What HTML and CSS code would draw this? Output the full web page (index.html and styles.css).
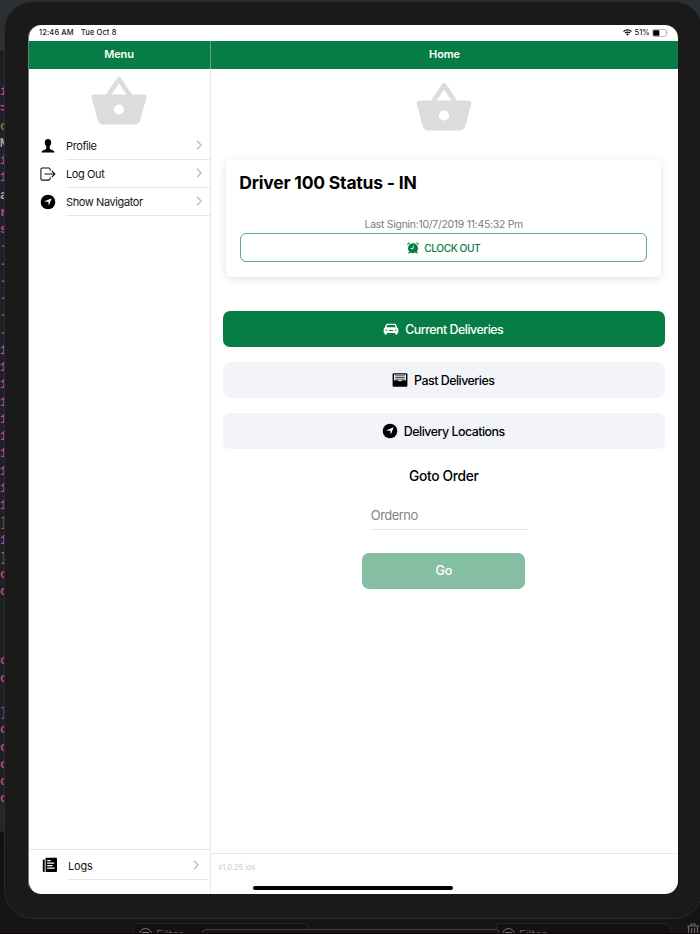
FILE: index.html
```html
<!DOCTYPE html>
<html lang="en">
<head>
<meta charset="utf-8">
<title>Home</title>
<link rel="stylesheet" href="styles.css">
</head>
<body>
<svg class="defs" width="0" height="0" aria-hidden="true">
  <symbol id="basket" viewBox="0 0 24 24"><path d="M17.21 9l-4.38-6.56c-.19-.28-.51-.42-.83-.42-.32 0-.64.14-.83.43L6.79 9H2c-.55 0-1 .45-1 1 0 .09.01.18.04.27l2.54 9.27c.23.84 1 1.46 1.92 1.46h13c.92 0 1.69-.62 1.93-1.46l2.54-9.27L23 10c0-.55-.45-1-1-1h-4.79zM9 9l3-4.4L15 9H9zm3 8c-1.1 0-2-.9-2-2s.9-2 2-2 2 .9 2 2-.9 2-2 2z"/></symbol>
  <symbol id="navigate" viewBox="0 0 16 16"><circle cx="8" cy="8" r="7.3"/><path d="M11.7 4.2 8.800 11.400 8.300 7.800 4 7.400z" fill="#fff"/></symbol>
  <symbol id="chevron" viewBox="0 0 6 10"><path d="M1 .8 5.100 5 1 9.200" fill="none" stroke="#bcbcc0" stroke-width="1.300"/></symbol>
</svg>
<div class="desktop">
  <div class="code"><span class="p">i</span><span class="p">=</span><span class="o">c</span><span class="w">M</span><span class="p">i</span><span class="p">1</span><span class="w">a</span><span class="p">r</span><span class="p">s</span><span class="p">-</span><span class="p">-</span><span class="p">-</span><span class="p">-</span><span class="p">-</span><span class="p">-</span><span class="p">1</span><span class="p">1</span><span class="p">1</span><span class="p">1</span><span class="p">1</span><span class="p">1</span><span class="p">1</span><span class="p">1</span><span class="p">1</span><span class="p">1</span><span class="o">]</span><span class="p">1</span><span class="o">]</span><span class="p">c</span><span class="p">c</span><span></span><span></span><span></span><span class="p">c</span><span class="p">c</span><span></span><span class="p">]</span><span class="p">c</span><span class="p">c</span><span class="p">c</span><span class="p">c</span><span class="p">c</span></div>
  <div class="device">
    <div class="screen">
      <div class="status">
        <span class="time">12:46 AM</span><span class="date">Tue Oct 8</span>
        <svg class="wifi" width="9" height="7" viewBox="0 0 9 7"><path d="M.5 2.500Q4.500-.8 8.500 2.500M2 4.100Q4.500 2 7 4.100" fill="none" stroke="#111" stroke-width="1.250"/><path d="M3.100 5.100Q4.500 4.100 5.900 5.100L4.500 6.700z"/></svg>
        <span class="percent">51%</span>
        <svg class="battery" width="17" height="8" viewBox="0 0 17 8"><rect x=".5" y=".5" width="13.800" height="7" rx="1.800" fill="none" stroke="#aaa" stroke-width=".8"/><rect x="1.200" y="1.300" width="6.200" height="5.400" rx=".6"/><path d="M15.300 2.600q1.200 1.400 0 2.800z" fill="#aaa"/></svg>
      </div>
      <div class="panes">
        <aside class="menu">
          <header class="bar">Menu</header>
          <svg class="logo"><use href="#basket"/></svg>
          <nav>
            <a class="row"><svg class="icon" viewBox="0 0 16 16"><path d="M8 .9c2 0 3.300 1.300 3.200 3.400-.1 2.100-.8 3.300-1.500 4.300v2c.6 1.500 4.600 1.300 4.900 3.900H1.400c.3-2.600 4.300-2.400 4.900-3.900v-2C5.600 7.600 4.900 6.400 4.800 4.300 4.700 2.200 6 .9 8 .9z"/></svg><span class="label">Profile<svg class="chev"><use href="#chevron"/></svg></span></a>
            <a class="row"><svg class="icon" viewBox="0 0 16 16"><path d="M10.200 4.700V3.200L8.900 1.900H1.900L.9 2.900V13.100L1.900 14.100H8.900L10.200 12.800V11.300M4.500 8H14.900M11.800 5 14.900 8 11.800 11" fill="none" stroke="#111" stroke-width="1.050"/></svg><span class="label">Log Out<svg class="chev"><use href="#chevron"/></svg></span></a>
            <a class="row"><svg class="icon"><use href="#navigate"/></svg><span class="label">Show Navigator<svg class="chev"><use href="#chevron"/></svg></span></a>
          </nav>
          <footer class="logs">
            <a class="row"><svg class="icon" viewBox="0 0 16 16"><path d="M3.600.8H14q1 0 1 1V14q0 1-1 1H3.600z"/><path d="M2.700 2.600H1.700Q.8 2.600.8 3.500V14q0 1 1 1h.9z"/><path d="M5.200 3.600h3.500M5.200 6.100h7M5.200 8.600h5.200M5.200 11.100h7.500" stroke="#fff" stroke-width="1.100"/></svg><span class="label">Logs<svg class="chev"><use href="#chevron"/></svg></span></a>
          </footer>
        </aside>
        <main class="home">
          <header class="bar">Home</header>
          <div class="content">
            <svg class="logo"><use href="#basket"/></svg>
            <section class="card">
              <h1>Driver 100 Status - IN</h1>
              <p>Last Signin:10/7/2019 11:45:32 Pm</p>
              <button class="clock"><svg width="12" height="12" viewBox="0 0 12 12"><circle cx="6" cy="6.300" r="5"/><path d="M.3 3.500Q0 .3 3.400.5zM11.700 3.500Q12 .3 8.600.5zM1 11.700 2.200 9 4 10.500zM11 11.700 9.800 9 8 10.500z"/><path d="M6.200 3.500V6.500H3.600" fill="none" stroke="#fff" stroke-width=".8"/></svg><span>CLOCK OUT</span></button>
            </section>
            <div class="actions">
              <button class="action primary"><svg viewBox="0 0 16 16"><path fill-rule="evenodd" d="M4 2.700h8q.7 0 1 .7L14.200 6.500q1.100.4 1.100 1.800v3.300q0 .4-.5.4h-.4v.7q0 1-1.100 1t-1.100-1V12H3.800v.7q0 1-1.100 1t-1.100-1V12h-.4q-.5 0-.5-.4V8.300q0-1.400 1.100-1.800L3 3.400q.3-.7 1-.7zM4.300 3.900 3.300 6.200h9.400l-1-2.300zM2.200 8.400q.2 1.400 2.400 1.200-.1-1.200-2.400-1.200zm11.600 0q-2.300 0-2.400 1.200 2.200.2 2.400-1.200zM6 10h4v-.9H6z"/></svg><span>Current Deliveries</span></button>
              <button class="action"><svg viewBox="0 0 16 16"><rect x=".6" y="1.200" width="14.800" height="13.600" rx="1.200"/><path d="M2 2.600h12v5.600h-4Q9.600 9.300 8 9.300T6 8.200H2z" fill="#f3f4f9"/><path d="M3.200 3.800h9.600M3.200 5.500h9.600M3.200 7.200h9.600" stroke="#222" stroke-width=".8"/></svg><span>Past Deliveries</span></button>
              <button class="action"><svg><use href="#navigate"/></svg><span>Delivery Locations</span></button>
            </div>
            <h2>Goto Order</h2>
            <input class="order" type="text" placeholder="Orderno" aria-label="Orderno">
            <button class="go">Go</button>
          </div>
          <footer class="version">v1.0.25 ios</footer>
        </main>
      </div>
      <div class="indicator"></div>
    </div>
  </div>
  <div class="console">
    <div class="filter"><i></i><span>Filter</span></div>
    <div class="filter second"><i></i><span>Filter</span></div>
    <svg class="trash" width="14" height="14" viewBox="0 0 14 14"><path d="M1 3h12M5 3V1h4v2M2.500 3v11M11.500 3v11M5.500 5v9M8.500 5v9" fill="none" stroke="#666" stroke-width="1.200"/></svg>
    <div class="overlay"></div>
  </div>
</div>
</body>
</html>
```
FILE: styles.css
```css
* { box-sizing: border-box; }
body { margin: 0; width: 700px; height: 934px; overflow: hidden; font-family: Inter, Roboto, sans-serif; color: #151515; background: #17181b; }
.defs { position: absolute; }
.desktop { width: 700px; height: 934px; display: grid; grid-template: 919px 15px / 4px 696px; overflow: hidden; background: linear-gradient(#2b3035 0, #2b3035 50px, #1b1c20 51px, #202128 80px, #1f2127 480px, #1d2023 803px, #25282b 804px, #25282b 831px, #111214 832px, #141517 934px); }
.code { padding: 84px 0 0; overflow: hidden; font: bold 12px "Liberation Mono", monospace; }
.code span { display: block; height: 17.25px; line-height: 17.25px; }
.code .p { color: #b84b81; }
.code .o { color: #9b6b38; }
.code .w { color: #aaa; }
.device { width: 699px; height: 918px; margin-top: 1px; padding: 24px 25px 25px 23px; background: #1a1a1a; border: 1px solid #292b2d; border-radius: 29px; }
.screen { position: relative; display: flex; flex-direction: column; width: 650px; height: 869px; margin-top: -1px; background: #fff; border-left: 1px solid #777; border-radius: 13px; overflow: hidden; }
.status { display: flex; align-items: center; flex: 0 0 15.5px; padding: 0 9.5px 0 10px; font-size: 7.5px; font-weight: 500; letter-spacing: .12px; }
.date { margin-left: 7px; }
.wifi { margin-left: auto; }
.percent { margin: 0 2px 0 3px; letter-spacing: -.1px; }
.panes { display: flex; flex: 1; min-height: 0; }
.menu { display: flex; flex-direction: column; width: 182px; border-right: 1px solid #e8e8e8; }
.home { display: flex; flex-direction: column; flex: 1; }
.bar { flex: 0 0 28px; line-height: 27px; text-align: center; font-size: 11px; font-weight: 600; letter-spacing: -.1px; color: #fff; background: #067d45; }
.menu .bar { width: 182px; padding-right: 1px; border-right: 1px solid #5ba582; }
.logo { display: block; flex: none; width: 60px; height: 60px; margin: 3px 61px 0 60px; fill: #dcdcdc; }
.row { display: flex; height: 28px; align-items: center; }
.icon { width: 16px; height: 16px; margin: 0 10.5px 0 10.5px; flex: none; }
.label { display: flex; flex: 1; align-items: center; height: 28px; padding-top: 1px; font-size: 11px; letter-spacing: -.4px; border-bottom: 1px solid #e6e6e8; }
.chev { width: 6px; height: 10px; margin: 0 8.5px 1px auto; }
.logs { margin-top: auto; height: 45px; border-top: 1px solid #e6e6e8; padding-right: 2px; }
.logs .row { height: 30px; }
.logs .label { height: 30px; padding-top: 2px; letter-spacing: -.2px; }
.logs .chev { margin-right: 9px; }
.logs .icon { margin: 0 10px 0 13px; }
.content { display: flex; flex-direction: column; align-items: center; flex: 1; padding-right: 1.5px; }
.content .logo { margin: 9px 0 0; }
.card { display: flex; flex-direction: column; width: 435px; height: 117px; margin-top: 22px; padding: 12.5px 14px 0; border-radius: 5px; box-shadow: 0 2px 9px rgba(0,0,0,.12); }
h1 { margin: 0 0 0 -1px; font-size: 17.5px; line-height: 22px; font-weight: 700; color: #000; letter-spacing: -.2px; }
p { margin: 24px 0 1px; font-size: 10.4px; line-height: 14px; letter-spacing: -.24px; color: #7a7a7a; text-align: center; }
button { display: flex; align-items: center; justify-content: center; padding: 0; border: 0; font-family: inherit; }
.clock { height: 29px; gap: 5px; background: #fff; border: 1px solid #5aab80; border-radius: 6px; font-size: 10.2px; font-weight: 500; letter-spacing: -.45px; color: #067d45; }
.clock svg { fill: #067d45; }
.actions { display: flex; flex-direction: column; gap: 15.3px; margin-top: 34.5px; }
.action { width: 442px; height: 35.7px; gap: 6px; border-radius: 7px; background: #f3f4f9; font-size: 12.4px; font-weight: 500; letter-spacing: -.5px; color: #000; }
.action svg { width: 16px; height: 16px; }
.primary { color: #fff; background: #067d45; }
.action span { padding: 1px 1px 0 0; }
.primary svg { fill: #fff; }
h2 { margin: 18.5px 0 0; font-size: 13.8px; line-height: 18px; font-weight: 500; letter-spacing: -.35px; color: #000; }
.order { width: 156px; height: 28px; margin-top: 17px; margin-left: 10px; padding: 0 0 1px; border: 0; border-bottom: 1px solid #e3e3e5; font: 13px Inter, sans-serif; letter-spacing: -.55px; }
.order::placeholder { color: #858585; opacity: 1; }
.go { width: 163px; height: 35.5px; margin-top: 23px; border-radius: 7px; background: #84bea3; color: #fff; font-size: 12.7px; font-weight: 500; letter-spacing: -.4px; }
.version { height: 41px; padding: 8px 7px 0; border-top: 1px solid #e8e8e8; font-size: 7.5px; line-height: 12px; color: #c9c9c9; }
.indicator { position: absolute; left: 224px; bottom: 4.5px; width: 200px; height: 3.5px; border-radius: 2px; background: #000; }
.console { grid-column: 1 / 3; position: relative; display: flex; overflow: hidden; padding: 4px 0 0 133px; border-bottom: 1px solid #100307; }
.filter { display: flex; flex: none; width: 175px; height: 22px; padding: 4px 0 0 5px; gap: 4px; background: #101113; border: 1px solid #242528; border-radius: 4px; font-size: 11.5px; line-height: 14px; color: #5b5b5b; }
.filter i { width: 13px; height: 13px; border: 1px solid #777; border-radius: 50%; background: linear-gradient(#777, #777) center 3px / 7px 1px no-repeat; }
.second { margin-left: 188px; }
.trash { margin-left: 15px; flex: none; }
.overlay { position: absolute; left: 202px; top: 10px; width: 298px; height: 14px; border: 1px solid #404144; border-radius: 4px; background: #171719; }
```
